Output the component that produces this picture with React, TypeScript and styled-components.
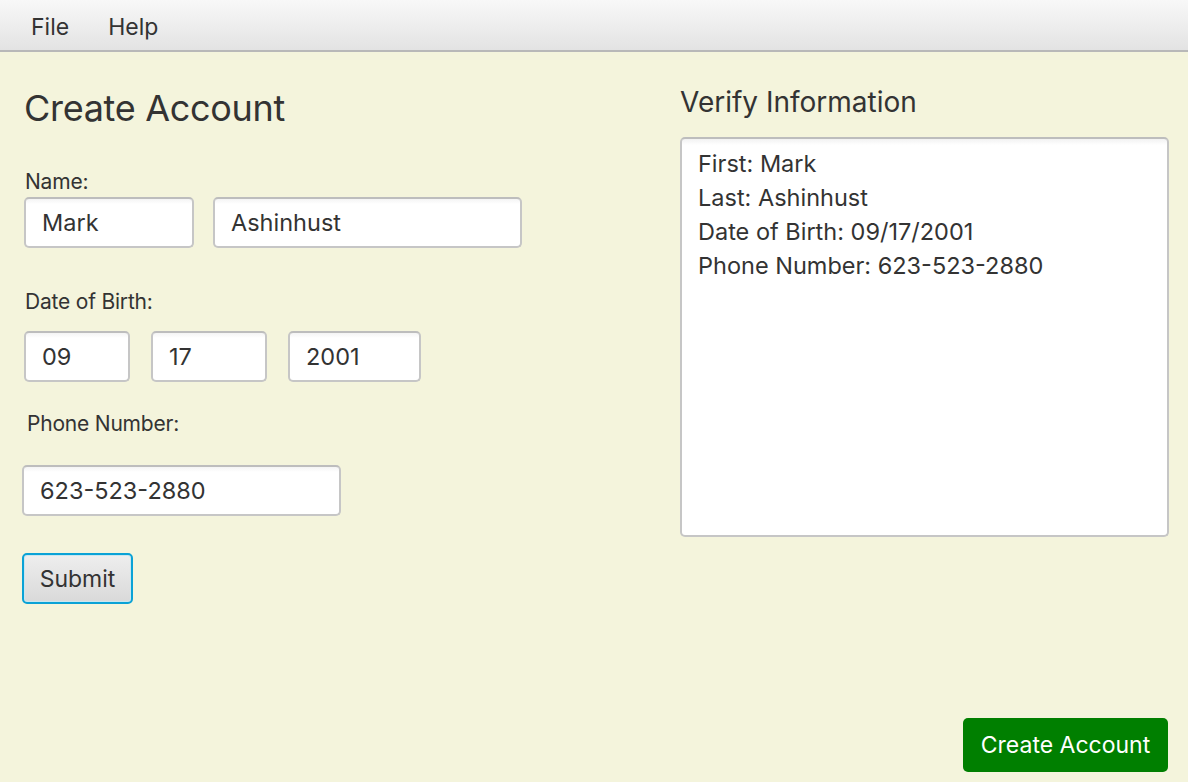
import styled, { createGlobalStyle } from 'styled-components';

const GlobalStyle = createGlobalStyle`
  html, body {
    margin: 0;
    padding: 0;
    background: #f4f4dc;
  }
  body {
    font-family: Inter, "Noto Sans", "Liberation Sans", sans-serif;
    color: #333333;
  }
  * {
    box-sizing: border-box;
  }
`;

const FIELD_LINES = [
  'First: Mark',
  'Last: Ashinhust',
  'Date of Birth: 09/17/2001',
  'Phone Number: 623-523-2880',
];

const App = () => {
  return (
    <Page>
      <GlobalStyle />
      <MenuBar>
        <MenuItem>File</MenuItem>
        <MenuItem>Help</MenuItem>
      </MenuBar>

      <Content>
        <FormColumn>
          <Title>Create Account</Title>

          <Label $top={41}>Name:</Label>
          <FieldRow $gap={19} $top={4}>
            <TextField $width={170} defaultValue="Mark" />
            <TextField $width={309} defaultValue="Ashinhust" />
          </FieldRow>

          <Label $top={43}>Date of Birth:</Label>
          <FieldRow $gap={21} $top={18}>
            <TextField $width={106} defaultValue="09" />
            <TextField $width={116} defaultValue="17" />
            <TextField $width={133} defaultValue="2001" />
          </FieldRow>

          <Label $top={31} $left={3}>Phone Number:</Label>
          <FieldRow $top={30} $left={-2}>
            <TextField $width={319} defaultValue="623-523-2880" />
          </FieldRow>

          <SubmitButton>Submit</SubmitButton>
        </FormColumn>

        <VerifyColumn>
          <SubTitle>Verify Information</SubTitle>
          <InfoArea>
            {FIELD_LINES.map((line) => (
              <InfoLine key={line}>{line}</InfoLine>
            ))}
          </InfoArea>
        </VerifyColumn>
      </Content>

      <Footer>
        <CreateButton>Create Account</CreateButton>
      </Footer>
    </Page>
  );
};

export default App;

const Page = styled.div`
  width: 1188px;
  height: 782px;
  display: flex;
  flex-direction: column;
  overflow: hidden;
`;

const MenuBar = styled.div`
  height: 52px;
  display: flex;
  align-items: center;
  gap: 1px;
  padding: 3px 0 0 12px;
  background: linear-gradient(#f8f8f8, #e3e3e3);
  border-bottom: 2px solid #b8b8b8;
`;

const MenuItem = styled.span`
  font-size: 23px;
  padding: 0 19px;
  color: #333333;
`;

const Content = styled.div`
  flex: 1;
  display: flex;
  padding: 0 19px 0 24px;
`;

const FormColumn = styled.div`
  width: 656px;
  display: flex;
  flex-direction: column;
  align-items: flex-start;
`;

const Title = styled.h1`
  margin: 34px 0 0 0;
  font-size: 36px;
  font-weight: 400;
  line-height: 44px;
  letter-spacing: -0.3px;
`;

const Label = styled.div<{ $top: number; $left?: number }>`
  margin-top: ${(p) => p.$top}px;
  margin-left: ${(p) => p.$left ?? 1}px;
  font-size: 21px;
  line-height: 22px;
  letter-spacing: -0.2px;
`;

const FieldRow = styled.div<{ $gap?: number; $top?: number; $left?: number }>`
  display: flex;
  gap: ${(p) => p.$gap ?? 0}px;
  margin-top: ${(p) => p.$top ?? 0}px;
  margin-left: ${(p) => p.$left ?? 0}px;
`;

const TextField = styled.input<{ $width: number }>`
  width: ${(p) => p.$width}px;
  height: 51px;
  padding: 0 16px;
  font-family: inherit;
  font-size: 23.5px;
  color: #333333;
  background: linear-gradient(#f4f4f4 0, #ffffff 5px);
  border: 2px solid #c6c6c6;
  border-top-color: #bdbdbd;
  border-radius: 5px;
  outline: none;
`;

const SubmitButton = styled.button`
  margin-top: 37px;
  margin-left: -2px;
  width: 111px;
  height: 51px;
  padding: 0;
  font-family: inherit;
  font-size: 23px;
  color: #333333;
  background: linear-gradient(#eeeeee, #d9d9d9);
  border: 2px solid #0aa2d6;
  border-radius: 5px;
  box-shadow: inset 0 0 0 1px #c9e6f0;
`;

const VerifyColumn = styled.div`
  flex: 1;
  display: flex;
  flex-direction: column;
`;

const SubTitle = styled.h2`
  margin: 32px 0 0 0;
  font-size: 28px;
  font-weight: 400;
  line-height: 36px;
`;

const InfoArea = styled.div`
  margin-top: 17px;
  height: 400px;
  padding: 8px 16px;
  background: linear-gradient(#f2f2f2 0, #ffffff 6px);
  border: 2px solid #c6c6c6;
  border-top-color: #bdbdbd;
  border-radius: 5px;
`;

const InfoLine = styled.div`
  font-size: 23.5px;
  line-height: 34px;
`;

const Footer = styled.div`
  display: flex;
  justify-content: flex-end;
  padding: 0 20px 10px 0;
`;

const CreateButton = styled.button`
  width: 205px;
  height: 54px;
  padding: 0;
  font-family: inherit;
  font-size: 23px;
  color: #ffffff;
  background: #007f00;
  border: none;
  border-radius: 5px;
`;
